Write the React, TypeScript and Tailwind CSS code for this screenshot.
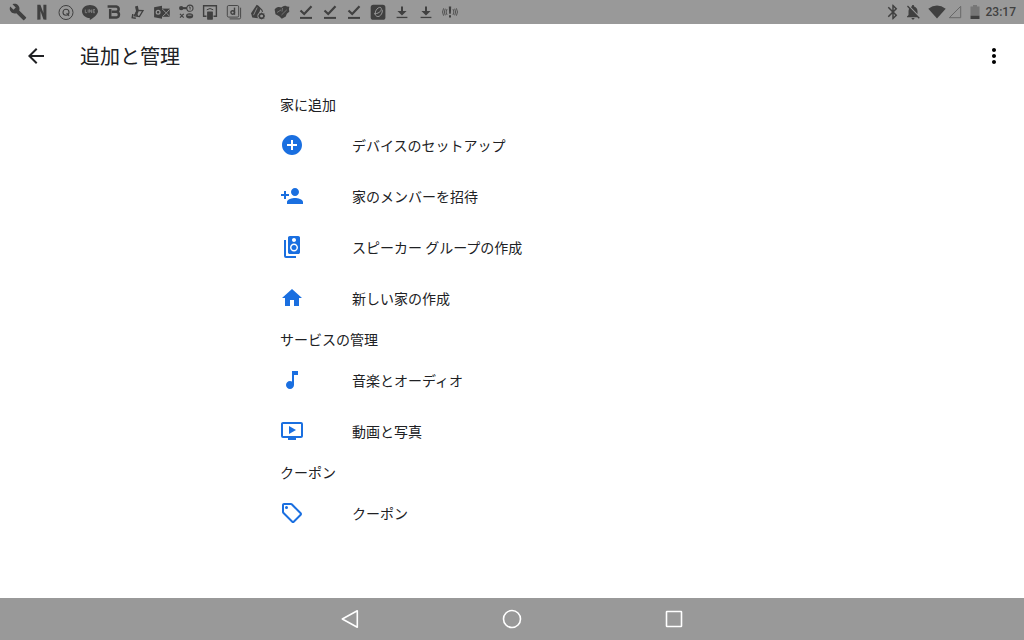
import type { ReactNode } from "react";
import {
  MdAddCircle,
  MdArrowBack,
  MdBluetooth,
  MdBuild,
  MdHome,
  MdMoreVert,
  MdMusicNote,
  MdNotificationsOff,
  MdOndemandVideo,
  MdOutlineLocalOffer,
  MdPersonAdd,
  MdSpeakerGroup,
} from "react-icons/md";

type Item = { label: string; icon: ReactNode };
type Section = { title: string; items: Item[] };

const sections: Section[] = [
  {
    title: "家に追加",
    items: [
      { label: "デバイスのセットアップ", icon: <MdAddCircle /> },
      { label: "家のメンバーを招待", icon: <MdPersonAdd /> },
      { label: "スピーカー グループの作成", icon: <MdSpeakerGroup /> },
      { label: "新しい家の作成", icon: <MdHome /> },
    ],
  },
  {
    title: "サービスの管理",
    items: [
      { label: "音楽とオーディオ", icon: <MdMusicNote /> },
      { label: "動画と写真", icon: <MdOndemandVideo /> },
    ],
  },
  {
    title: "クーポン",
    items: [{ label: "クーポン", icon: <MdOutlineLocalOffer /> }],
  },
];

function Glyph({ children }: { children: ReactNode }) {
  return (
    <svg viewBox="0 0 16 16" className="size-4 overflow-visible" fill="currentColor" aria-hidden="true">
      {children}
    </svg>
  );
}

const CheckGlyph = () => (
  <Glyph>
    <path d="M2.500 6.500 6.200 10 13.500 2.300" fill="none" stroke="currentColor" strokeWidth="2.200" />
    <path d="M2 12.900h12v2H2z" />
  </Glyph>
);

const DownloadGlyph = () => (
  <Glyph>
    <path d="M7 2.500h2v4.600h3.600L8 11.600 3.400 7.100H7z" />
    <path d="M2.600 12.800h10.800v1.300H2.600z" />
  </Glyph>
);

const notifications: ReactNode[] = [
  <MdBuild className="size-[18px]" />,
  <Glyph>
    <path d="M3.300.8h3.100l3 8.200V.8h3v15l-2.900-.4-3-8.500v8.500l-3.200.4z" />
  </Glyph>,
  <Glyph>
    <circle cx="8" cy="8.500" r="7" fill="none" stroke="currentColor" strokeWidth="1" />
    <circle cx="8" cy="8.200" r="3" fill="none" stroke="currentColor" strokeWidth="1.100" />
    <path d="m8.600 9 2.500 3" stroke="currentColor" strokeWidth="1.100" />
  </Glyph>,
  <Glyph>
    <path d="M8 .9c4.400 0 8 2.800 8 6.300 0 3-4.200 6.500-7.700 8.500-.8.400-.7-.2-.5-1.600C3.400 13.900 0 10.800 0 7.200 0 3.700 3.600.9 8 .9z" />
    <path
      d="M3.300 5.500v3.200h1.700M6.200 5.500v3.200M7.600 8.700V5.500l2 3.200V5.500M13 5.500h-1.800v3.200H13M11.200 7.100h1.700"
      fill="none"
      stroke="#8a8a8a"
      strokeWidth=".8"
    />
  </Glyph>,
  <Glyph>
    <path
      d="M1.600 2.400h8.700a2.700 2.700 0 0 1 .3 5.300H5.800M10.600 7.700a3 3 0 0 1-.2 5.900H4.200V5"
      fill="none"
      stroke="currentColor"
      strokeWidth="2.500"
    />
  </Glyph>,
  <Glyph>
    <path d="m5 2.500 2.800-.8 1 4.800-1 3.300-2.600-.6.800-2.200z" />
    <path d="m7.600 6.400 5.400.2-3.600 6-5.200-.8z" fill="none" stroke="currentColor" strokeWidth="1.300" />
    <path d="m4 11.200 3.100-2.600 1.200 3.600z" />
    <path d="m2.800 10-.6 3.600 3.600.6" fill="none" stroke="currentColor" strokeWidth="1.400" />
  </Glyph>,
  <Glyph>
    <path d="M.1 3.300 8 1.800v13L.1 13.200z" />
    <path d="M8 4.600h7.800v8.200H8z" />
    <path d="m8.300 5 4 4 3.300-3.700M8.500 12.500l3.800-3.500 3.300 3.200" fill="none" stroke="#999" strokeWidth=".9" />
    <circle cx="4.100" cy="8.300" r="1.900" fill="none" stroke="#999" strokeWidth="1.200" />
  </Glyph>,
  <Glyph>
    <circle cx="3.200" cy="4.100" r="2.200" />
    <path d="M4 3.100h5v2.100H4z" />
    <circle cx="11.900" cy="4.200" r="3.100" fill="none" stroke="currentColor" strokeWidth="1.100" />
    <path d="M11 3h1.100v2.600" fill="none" stroke="currentColor" strokeWidth=".9" />
    <path d="m2 9.800 3.700 3.900M5.700 9.800 2 13.700" stroke="currentColor" strokeWidth="1.200" />
    <ellipse cx="11.600" cy="11.800" rx="3.600" ry="2.600" />
    <path d="M9.600 11.200h4" stroke="#999" strokeWidth=".8" />
  </Glyph>,
  <Glyph>
    <path d="M4.500 12.300H1.600V1.700h12.800v10.600h-2.900" fill="none" stroke="currentColor" strokeWidth="1.400" />
    <rect x="5.100" y="7.500" width="5.800" height="8.200" rx=".6" />
    <path d="M4.800 5.800q3.200-2.600 6.400 0" fill="none" stroke="currentColor" strokeWidth="1" />
  </Glyph>,
  <Glyph>
    <rect x="1.300" y="1.500" width="11.400" height="11.600" rx="1.400" fill="none" stroke="currentColor" strokeWidth=".9" />
    <path d="M3.600 14.900h9.700q1.300 0 1.300-1.300V3.700" fill="none" stroke="currentColor" strokeWidth=".9" />
    <circle cx="6.700" cy="8.500" r="1.800" fill="none" stroke="currentColor" strokeWidth="1.400" />
    <path d="M8.500 3.600v7.200" stroke="currentColor" strokeWidth="1.400" />
  </Glyph>,
  <Glyph>
    <path d="M6.700.8 10.500 4.500 7.800 14.200 2.300 13.500 1 9.300z" />
    <path d="m7.300 1.500 4.600 4.500.8 2.500" fill="none" stroke="currentColor" strokeWidth="1.100" />
    <path d="m7.200 3.500-3.700 7.700" stroke="#999" strokeWidth=".8" />
    <circle cx="11.600" cy="12" r="4.200" fill="#999" />
    <circle cx="11.600" cy="12" r="2.300" fill="none" stroke="currentColor" strokeWidth="1.600" />
    <path
      d="M11.600 8.600v1.700M11.600 13.700v1.700M8.200 12h1.700M13.300 12H15M9.200 9.600l1.200 1.200M12.800 13.200l1.200 1.200M9.200 14.400l1.200-1.200M12.800 10.800 14 9.600"
      stroke="currentColor"
      strokeWidth="1"
    />
  </Glyph>,
  <Glyph>
    <path d="M.6 5.500q1-2 3.400-2.500 2-.3 3.300.6Q9.500 1.500 11.500 1.800l1.600.8 2.300.2-.5 2 .4 3-2.500 2-1 2.800-4 2.200-2.600-2.600-3.700-2z" />
    <path d="m3 8.500 4-2.600M7.500 11l5.300-5.200M8.500 4l-.5 3.600" stroke="#999" strokeWidth=".6" />
  </Glyph>,
  <CheckGlyph />,
  <CheckGlyph />,
  <CheckGlyph />,
  <Glyph>
    <rect x=".7" y=".8" width="14.700" height="15" rx="2.600" />
    <path
      d="M4 9.800c3.500.2 7.900-2.300 7.300-5.300-.5-2.300-4.200-.8-5.500 2.300-1.200 3-.4 5.800 2.200 5.700 2.800 0 4.700-4 4.300-6.700"
      fill="none"
      stroke="#999"
      strokeWidth="1"
    />
  </Glyph>,
  <DownloadGlyph />,
  <DownloadGlyph />,
  <Glyph>
    <path d="M6.800 2.500h2.400l-.4 7.200H7.200zM7 11.200h2v2.200H7z" />
    <path
      d="M1.600 4.300q-2.200 3.700 0 7.400M5 5.100q-1.800 2.900 0 5.800M3.300 4.700q-2 3.300 0 6.600M14.400 4.300q2.200 3.700 0 7.400M11 5.100q1.800 2.900 0 5.800M12.700 4.700q2 3.300 0 6.600"
      fill="none"
      stroke="currentColor"
      strokeWidth=".8"
    />
  </Glyph>,
];

function StatusBar() {
  return (
    <div className="flex h-6 shrink-0 items-center justify-between bg-[#999] pr-2 pl-1.5 text-[#404040]">
      <div className="flex items-center">
        {notifications.map((icon, i) => (
          <span key={i} className="flex w-6 items-center justify-center">
            {icon}
          </span>
        ))}
      </div>
      <div className="flex items-center">
        <MdBluetooth className="mr-0.5 size-[18px]" />
        <MdNotificationsOff className="mr-1.5 size-[18px]" />
        <svg viewBox="0 0 18 14" className="mr-0.5 h-3.5 w-[18px]" fill="currentColor" aria-hidden="true">
          <path d="M.3 3.800Q9-2.800 17.700 3.800L9 13.600z" />
        </svg>
        <svg viewBox="0 0 14 14" className="mr-2 size-3.5" fill="none" stroke="#686868" aria-hidden="true">
          <path d="M1.300 12.700h11.400V1.300z" />
        </svg>
        <svg viewBox="0 0 10 14" className="mr-1.5 h-3.5 w-2.5" aria-hidden="true">
          <path d="M3 0h4v1.500h2.500v9.500H.500V1.500H3z" fill="#777" />
          <path d="M.500 10.800h9V14H.500z" fill="currentColor" />
        </svg>
        <time className="font-['Roboto',sans-serif] text-xs font-medium">23:17</time>
      </div>
    </div>
  );
}

function NavButton({ label, children }: { label: string; children: ReactNode }) {
  return (
    <button type="button" aria-label={label} className="flex h-full w-[162px] items-center justify-center">
      <svg
        viewBox="0 0 20 20"
        className="size-5"
        fill="none"
        stroke="currentColor"
        strokeWidth="1.600"
        strokeLinejoin="round"
        aria-hidden="true"
      >
        {children}
      </svg>
    </button>
  );
}

export default function App() {
  return (
    <div
      lang="ja"
      className="flex min-h-screen flex-col bg-white font-['Noto_Sans_CJK_JP',sans-serif] text-[#202124]"
    >
      <StatusBar />
      <header className="flex h-16 shrink-0 items-center px-[18px]">
        <button type="button" aria-label="戻る" className="p-1.5">
          <MdArrowBack className="size-6" />
        </button>
        <h1 className="ml-[26px] flex-1 text-xl leading-7">追加と管理</h1>
        <button type="button" aria-label="その他" className="text-black">
          <MdMoreVert className="size-6" />
        </button>
      </header>
      <main className="mx-auto w-full max-w-[464px] flex-1">
        {sections.map((section) => (
          <section key={section.title}>
            <h2 className="flex h-[31px] items-center text-sm">{section.title}</h2>
            <ul>
              {section.items.map((item) => (
                <li key={item.label}>
                  <button type="button" className="flex h-[51px] w-full items-center gap-12 text-left text-sm">
                    <span className="text-2xl text-[#1a6fe0]">{item.icon}</span>
                    {item.label}
                  </button>
                </li>
              ))}
            </ul>
          </section>
        ))}
      </main>
      <nav className="flex h-[42px] shrink-0 items-center justify-center bg-[#999] text-white">
        <NavButton label="戻る">
          <path d="M17.300 1.800v16.400L2.300 10z" />
        </NavButton>
        <NavButton label="ホーム">
          <circle cx="10" cy="10" r="8.500" />
        </NavButton>
        <NavButton label="最近">
          <rect x="2.500" y="2.500" width="15" height="15" rx=".5" />
        </NavButton>
      </nav>
    </div>
  );
}
